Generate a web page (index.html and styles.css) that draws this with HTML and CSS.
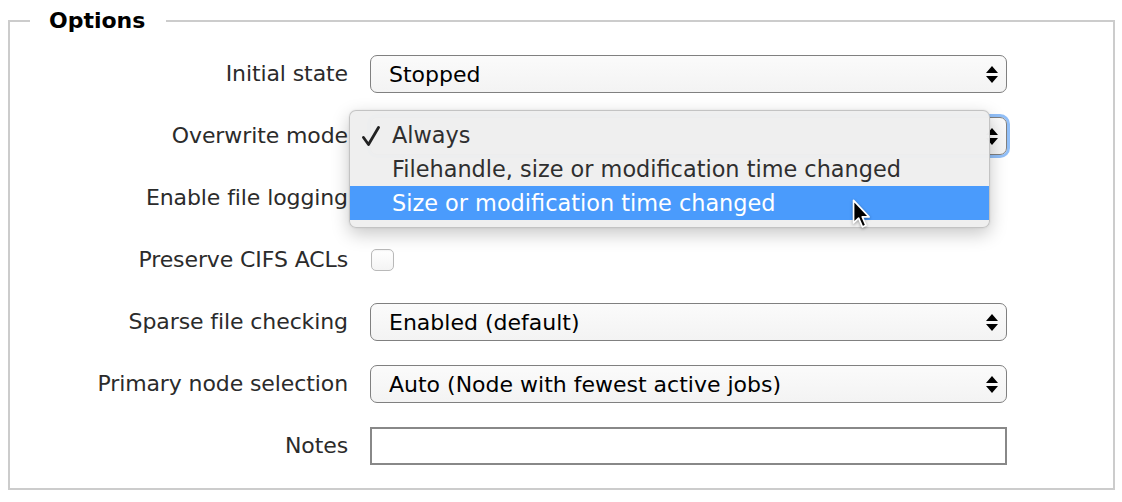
FILE: index.html
```html
<!DOCTYPE html>
<html lang="en">
<head>
<meta charset="utf-8">
<title>Options</title>
<link rel="stylesheet" href="styles.css">
</head>
<body>
<fieldset class="options">
  <legend class="options-legend">Options</legend>
  <div class="form-grid">
    <label class="field-label">Initial state</label>
    <div class="control">
      <div class="select"><span class="select-value">Stopped</span>
        <svg class="select-arrows" viewBox="0 0 12 17" width="12" height="17"><path d="M6 0 L12 7 L0 7 Z M0 10 L12 10 L6 17 Z" fill="#000"/></svg>
      </div>
    </div>

    <label class="field-label">Overwrite mode</label>
    <div class="control">
      <div class="select select-focused"><span class="select-value select-value-covered">Always</span>
        <svg class="select-arrows" viewBox="0 0 12 17" width="12" height="17"><path d="M6 0 L12 7 L0 7 Z M0 10 L12 10 L6 17 Z" fill="#000"/></svg>
      </div>
      <div class="menu">
        <div class="menu-item">
          <svg class="menu-check" viewBox="0 0 18 20" width="18" height="20"><path d="M1.5 11.5 L6.5 18.5 L16.5 1.5" fill="none" stroke="#222" stroke-width="2.8" stroke-linecap="round" stroke-linejoin="round"/></svg>Always</div>
        <div class="menu-item">Filehandle, size or modification time changed</div>
        <div class="menu-item menu-item-active">Size or modification time changed</div>
        <svg class="cursor" viewBox="0 0 14 22" width="20" height="31"><path d="M1 1 L1 17 L4.6 13.6 L7.3 19.8 L9.8 18.7 L7.2 12.7 L12 12.7 Z" fill="#000" stroke="#fff" stroke-width="1.2" stroke-linejoin="round"/></svg>
      </div>
    </div>

    <label class="field-label">Enable file logging</label>
    <div class="control"><span class="checkbox"></span></div>

    <label class="field-label">Preserve CIFS ACLs</label>
    <div class="control"><span class="checkbox"></span></div>

    <label class="field-label">Sparse file checking</label>
    <div class="control">
      <div class="select"><span class="select-value">Enabled (default)</span>
        <svg class="select-arrows" viewBox="0 0 12 17" width="12" height="17"><path d="M6 0 L12 7 L0 7 Z M0 10 L12 10 L6 17 Z" fill="#000"/></svg>
      </div>
    </div>

    <label class="field-label">Primary node selection</label>
    <div class="control">
      <div class="select"><span class="select-value">Auto (Node with fewest active jobs)</span>
        <svg class="select-arrows" viewBox="0 0 12 17" width="12" height="17"><path d="M6 0 L12 7 L0 7 Z M0 10 L12 10 L6 17 Z" fill="#000"/></svg>
      </div>
    </div>

    <label class="field-label">Notes</label>
    <div class="control"><div class="text-input"></div></div>
  </div>
</fieldset>
</body>
</html>
```

FILE: styles.css
```css
html, body {
  margin: 0;
  padding: 0;
  background: #fff;
}

body {
  font-family: "DejaVu Sans", Verdana, sans-serif;
  font-size: 22px;
  color: #333;
  padding-top: 8px;
}

.options {
  margin: 0 7px 12px 8px;
  padding: 21px 0 23px 0;
  border: 2px solid #cccccc;
  min-width: 0;
}

.options-legend {
  margin-left: 20px;
  padding: 0 21px 0 19px;
  font-weight: bold;
  color: #000;
  line-height: 26px;
}

.form-grid {
  display: grid;
  grid-template-columns: 338px 637px;
  column-gap: 22px;
  row-gap: 24px;
  align-items: center;
}

.field-label {
  text-align: right;
  line-height: 38px;
  white-space: nowrap;
  color: #2b2b2b;
  letter-spacing: -0.1px;
}

.control {
  position: relative;
  height: 38px;
  display: flex;
  align-items: center;
}

.select {
  box-sizing: border-box;
  width: 100%;
  height: 38px;
  border: 1px solid #808080;
  border-radius: 7px;
  background: linear-gradient(#fbfbfb, #f3f3f3);
  display: flex;
  align-items: center;
  justify-content: space-between;
  padding: 0 8px 0 18px;
  color: #000;
}

.select-focused {
  box-shadow: 0 0 0 3px rgba(86, 156, 245, 0.65);
}

.select-value {
  white-space: nowrap;
}

.select-value-covered {
  visibility: hidden;
}

.select-arrows {
  display: block;
}

.checkbox {
  box-sizing: border-box;
  display: block;
  width: 23px;
  height: 22px;
  margin-left: 1px;
  border: 1px solid #b9b9b9;
  border-radius: 5px;
  background: linear-gradient(#ffffff, #f4f4f4);
  box-shadow: inset 0 1px 1px rgba(0, 0, 0, 0.04);
}

.text-input {
  box-sizing: border-box;
  width: 100%;
  height: 38px;
  border: 2px solid #888;
  background: #fff;
}

.menu {
  position: absolute;
  left: -21px;
  top: -7px;
  box-sizing: border-box;
  width: 641px;
  padding: 7px 0;
  background: rgba(239, 239, 239, 0.98);
  border: 1px solid rgba(0, 0, 0, 0.18);
  border-radius: 7px;
  box-shadow: 0 6px 18px rgba(0, 0, 0, 0.22), 0 0 2px rgba(0, 0, 0, 0.1);
  color: #2f2f2f;
  font-size: 22.4px;
  z-index: 10;
}

.menu-item {
  position: relative;
  height: 34px;
  line-height: 34px;
  padding-left: 42px;
  white-space: nowrap;
}

.menu-item-active {
  background: #4a9bfc;
  color: #fff;
}

.menu-check {
  position: absolute;
  left: 12px;
  top: 8px;
}

.cursor {
  position: absolute;
  left: 502px;
  top: 88px;
  filter: drop-shadow(0 1px 1.5px rgba(0, 0, 0, 0.35));
}
```
